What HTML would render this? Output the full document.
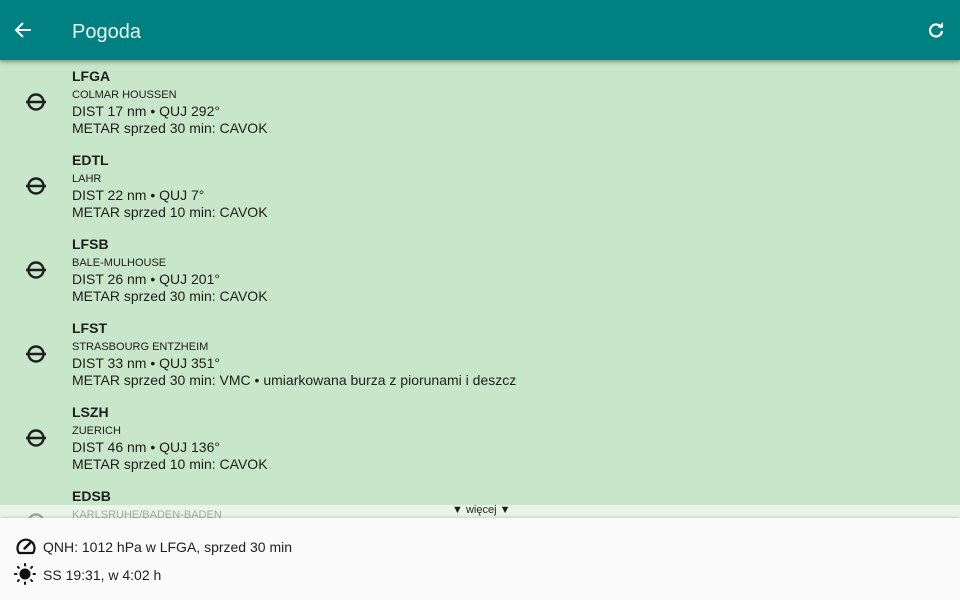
<!DOCTYPE html>
<html><head><meta charset="utf-8"><style>
*{margin:0;padding:0;box-sizing:border-box}
body{width:960px;height:600px;overflow:hidden;background:#c8e6c9;font-family:"Liberation Sans",sans-serif;color:#1e1e1e;position:relative}
.bar{position:absolute;left:0;top:0;width:960px;height:60px;background:#008080;box-shadow:0 2px 4px rgba(0,0,0,.35);z-index:3}
.bar .t{position:absolute;left:72px;top:21px;color:#e8f6f6;font-size:20px}
.item{position:absolute;left:0;width:960px;height:84px}
.item .ic{position:absolute;left:25px;top:30px}
.item .a{position:absolute;left:72px;top:6px;font-size:14px;font-weight:bold}
.item .b{position:absolute;left:72px;top:27px;font-size:11px}
.item .c{position:absolute;left:72px;top:41px;font-size:14px}
.item .d{position:absolute;left:72px;top:58px;font-size:14px}
.fade{position:absolute;left:0;top:505px;width:960px;height:14px;background:rgba(255,255,255,.6);z-index:2}
.more{position:absolute;left:452px;top:504px;font-size:11px;z-index:2}
.bot{position:absolute;left:0;top:518px;width:960px;height:82px;background:#fafafa;box-shadow:0 -1px 3px rgba(0,0,0,.15);z-index:2}
.bot div{position:absolute;left:43px;font-size:14px}
</style></head><body>
<div class="bar">
<svg style="position:absolute;left:14px;top:21px" width="18" height="18" viewBox="0 0 18 18"><path d="M17 9H2M9 2L2 9l7 7" stroke="#fff" stroke-width="2" fill="none"/></svg>
<div class="t">Pogoda</div>
<svg style="position:absolute;left:927px;top:21px" width="18" height="18" viewBox="0 0 18 18"><path d="M14.5 7A6 6 0 1 0 15 10" stroke="#fff" stroke-width="2.2" fill="none"/><path d="M10.5 6.5H16V1z" fill="#fff"/></svg>
</div>

<div class="item" style="top:62px"><svg class="ic" width="22" height="20" viewBox="0 0 22 20"><circle cx="11" cy="10" r="7.5" stroke="#1e1e1e" stroke-width="2.4" fill="none"/><path d="M1 10h20" stroke="#1e1e1e" stroke-width="2.4"/></svg><div class="a">LFGA</div><div class="b">COLMAR HOUSSEN</div><div class="c">DIST 17 nm • QUJ 292°</div><div class="d">METAR sprzed 30 min: CAVOK</div></div>
<div class="item" style="top:146px"><svg class="ic" width="22" height="20" viewBox="0 0 22 20"><circle cx="11" cy="10" r="7.5" stroke="#1e1e1e" stroke-width="2.4" fill="none"/><path d="M1 10h20" stroke="#1e1e1e" stroke-width="2.4"/></svg><div class="a">EDTL</div><div class="b">LAHR</div><div class="c">DIST 22 nm • QUJ 7°</div><div class="d">METAR sprzed 10 min: CAVOK</div></div>
<div class="item" style="top:230px"><svg class="ic" width="22" height="20" viewBox="0 0 22 20"><circle cx="11" cy="10" r="7.5" stroke="#1e1e1e" stroke-width="2.4" fill="none"/><path d="M1 10h20" stroke="#1e1e1e" stroke-width="2.4"/></svg><div class="a">LFSB</div><div class="b">BALE-MULHOUSE</div><div class="c">DIST 26 nm • QUJ 201°</div><div class="d">METAR sprzed 30 min: CAVOK</div></div>
<div class="item" style="top:314px"><svg class="ic" width="22" height="20" viewBox="0 0 22 20"><circle cx="11" cy="10" r="7.5" stroke="#1e1e1e" stroke-width="2.4" fill="none"/><path d="M1 10h20" stroke="#1e1e1e" stroke-width="2.4"/></svg><div class="a">LFST</div><div class="b">STRASBOURG ENTZHEIM</div><div class="c">DIST 33 nm • QUJ 351°</div><div class="d">METAR sprzed 30 min: VMC • umiarkowana burza z piorunami i deszcz</div></div>
<div class="item" style="top:398px"><svg class="ic" width="22" height="20" viewBox="0 0 22 20"><circle cx="11" cy="10" r="7.5" stroke="#1e1e1e" stroke-width="2.4" fill="none"/><path d="M1 10h20" stroke="#1e1e1e" stroke-width="2.4"/></svg><div class="a">LSZH</div><div class="b">ZUERICH</div><div class="c">DIST 46 nm • QUJ 136°</div><div class="d">METAR sprzed 10 min: CAVOK</div></div>
<div class="item" style="top:482px"><svg class="ic" width="22" height="20" viewBox="0 0 22 20"><circle cx="11" cy="10" r="7.5" stroke="#1e1e1e" stroke-width="2.4" fill="none"/><path d="M1 10h20" stroke="#1e1e1e" stroke-width="2.4"/></svg><div class="a">EDSB</div><div class="b">KARLSRUHE/BADEN-BADEN</div></div>

<div class="fade"></div>
<div class="more">▼ więcej ▼</div>
<div class="bot">
<svg style="position:absolute;left:15px;top:18px" width="22" height="20" viewBox="0 0 22 20"><path d="M4 17A8.5 8.5 0 1 1 18 17Z" stroke="#111" stroke-width="2.2" fill="none" stroke-linejoin="round"/><path d="M9.5 12.5L15 7" stroke="#111" stroke-width="2.4" stroke-linecap="round"/></svg>
<div style="top:21px">QNH: 1012 hPa w LFGA, sprzed 30 min</div>
<svg style="position:absolute;left:14px;top:45px" width="22" height="22" viewBox="0 0 22 22"><circle cx="11" cy="11" r="5.5" fill="#111"/><g stroke="#111" stroke-width="2" stroke-linecap="round"><path d="M11 1v1.5M11 19.5V21M1 11h1.5M19.5 11H21M3.9 3.9l1 1M17.1 17.1l1 1M3.9 18.1l1-1M17.1 4.9l1-1"/></g></svg>
<div style="top:49px">SS 19:31, w 4:02 h</div>
</div>
</body></html>
